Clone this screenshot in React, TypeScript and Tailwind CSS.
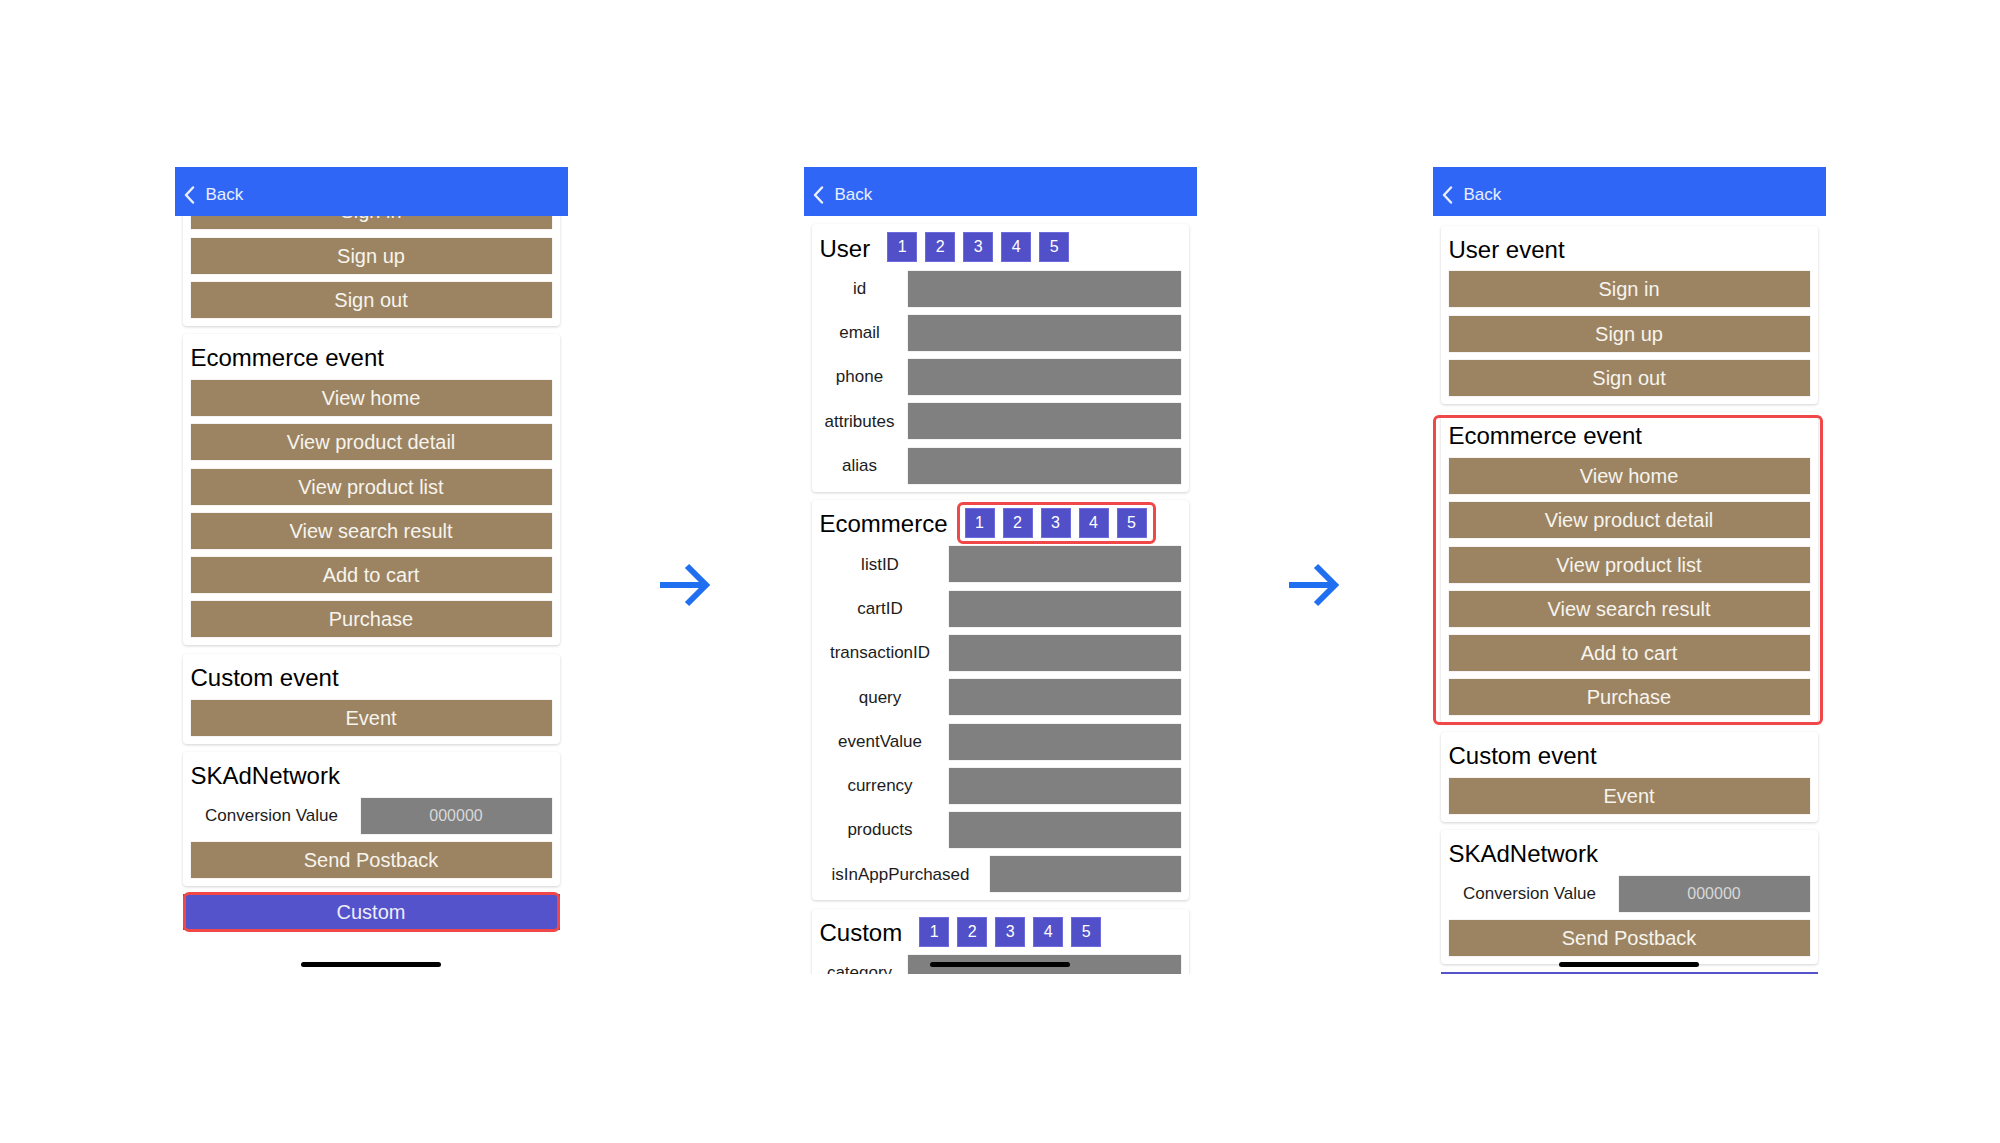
import type { ReactNode } from "react";

const userEvents = ["Sign in", "Sign up", "Sign out"];
const ecommerceEvents = [
  "View home",
  "View product detail",
  "View product list",
  "View search result",
  "Add to cart",
  "Purchase",
];
const userFields = ["id", "email", "phone", "attributes", "alias"];
const ecommerceFields = ["listID", "cartID", "transactionID", "query", "eventValue", "currency", "products"];

function Chevron() {
  return (
    <svg width="11" height="18" viewBox="0 0 11 18" fill="none" stroke="currentColor" strokeWidth="2.4" strokeLinecap="round" strokeLinejoin="round">
      <polyline points="9,1.5 2,9 9,16.5" />
    </svg>
  );
}

function NavBar() {
  return (
    <div className="relative z-10 flex h-[49px] shrink-0 items-center gap-[11px] bg-[#2f66f6] pl-[9px] pt-[6px] text-[17px] text-white/90">
      <Chevron />
      <span>Back</span>
    </div>
  );
}

function Phone({ children }: { children: ReactNode }) {
  return (
    <div className="relative flex h-[807px] w-[393px] shrink-0 flex-col overflow-hidden bg-white">
      <NavBar />
      <div className="relative flex-1 overflow-hidden">{children}</div>
      <div className="absolute bottom-[7px] left-1/2 h-[5px] w-[140px] -translate-x-1/2 rounded-full bg-black" />
    </div>
  );
}

// red annotation frame drawn over a highlighted element
function Mark({ className }: { className: string }) {
  return <div className={`pointer-events-none absolute rounded-[6px] border-[3px] border-[#f04848] ${className}`} />;
}

function Card({ head, children, mark }: { head: ReactNode; children: ReactNode; mark?: boolean }) {
  return (
    <div className="relative flex flex-col gap-[8.3px] rounded-[4px] bg-white p-2 shadow-[0_1px_3px_rgba(0,0,0,0.18)]">
      {head}
      {children}
      {mark && <Mark className="-bottom-[2px] -left-2 -right-[5px] top-[3px]" />}
    </div>
  );
}

function Title({ children }: { children: ReactNode }) {
  return <div className="h-[29.5px] text-[24px] leading-[31px] text-black">{children}</div>;
}

function EventButton({ label }: { label: string }) {
  return (
    <div className="flex h-9 items-center justify-center bg-[#9c8462] text-[20px] text-[#f7f4ee] shadow-[0_0_1px_rgba(0,0,0,0.25)]">
      {label}
    </div>
  );
}

function NumberBoxes({ mark }: { mark?: boolean }) {
  return (
    <div className="relative flex gap-2">
      {[1, 2, 3, 4, 5].map((n) => (
        <div
          key={n}
          className="flex h-[30px] w-[30px] items-center justify-center border border-[#6e6cdc] bg-[#5150c8] text-[16px] text-white"
        >
          {n}
        </div>
      ))}
      {mark && <Mark className="-bottom-[6px] -left-2 -right-[9px] -top-[6px]" />}
    </div>
  );
}

function TabHead({ title, mark }: { title: string; mark?: boolean }) {
  return (
    <div className="flex h-[30px] items-center gap-[17px]">
      <Title>{title}</Title>
      <NumberBoxes mark={mark} />
    </div>
  );
}

function FieldRow({ label, width, value }: { label: string; width: string; value?: string }) {
  return (
    <div className="flex h-9 items-center gap-2">
      <div className={`shrink-0 text-center text-[17px] text-[#1c1c1c] ${width}`}>{label}</div>
      <div className="flex h-9 flex-1 items-center justify-center bg-[#808080] text-[16px] text-[#d8d8d8] shadow-[0_0_1px_rgba(0,0,0,0.3)]">
        {value}
      </div>
    </div>
  );
}

function CustomButton({ mark }: { mark?: boolean }) {
  return (
    <div className="relative flex h-9 items-center justify-center bg-[#5553cc] text-[20px] text-[#eeeefa]">
      Custom
      {mark && <Mark className="-inset-y-[2px] inset-x-0 rounded-[5px]" />}
    </div>
  );
}

function EventScreen({ markEcommerce, markCustom }: { markEcommerce?: boolean; markCustom?: boolean }) {
  return (
    <div className="flex flex-col gap-[8.3px] px-2 pt-[9.5px]">
      <Card head={<Title>User event</Title>}>
        {userEvents.map((e) => (
          <EventButton key={e} label={e} />
        ))}
      </Card>
      <Card head={<Title>Ecommerce event</Title>} mark={markEcommerce}>
        {ecommerceEvents.map((e) => (
          <EventButton key={e} label={e} />
        ))}
      </Card>
      <Card head={<Title>Custom event</Title>}>
        <EventButton label="Event" />
      </Card>
      <Card head={<Title>SKAdNetwork</Title>}>
        <FieldRow label="Conversion Value" width="w-[162px]" value="000000" />
        <EventButton label="Send Postback" />
      </Card>
      <CustomButton mark={markCustom} />
    </div>
  );
}

function ParamScreen() {
  return (
    <div className="flex flex-col gap-[8.3px] px-2 pt-[8.3px]">
      <Card head={<TabHead title="User" />}>
        {userFields.map((f) => (
          <FieldRow key={f} label={f} width="w-[80px]" />
        ))}
      </Card>
      <Card head={<TabHead title="Ecommerce" mark />}>
        {ecommerceFields.map((f) => (
          <FieldRow key={f} label={f} width="w-[121px]" />
        ))}
        <FieldRow label="isInAppPurchased" width="w-[162px]" />
      </Card>
      <Card head={<TabHead title="Custom" />}>
        <FieldRow label="category" width="w-[80px]" />
        <FieldRow label="action" width="w-[80px]" />
      </Card>
    </div>
  );
}

function Arrow() {
  return (
    <div className="flex w-[236px] shrink-0 justify-center pt-[396px]">
      <svg width="52" height="44" viewBox="0 0 52 44" fill="none" stroke="#1f6ff0" strokeWidth="6">
        <path d="M0 22H46" />
        <path d="M27 3L46 22L27 41" />
      </svg>
    </div>
  );
}

export default function App() {
  return (
    <div className="flex h-[1143px] w-full justify-center bg-white pt-[167px] font-['Liberation_Sans',Arial,sans-serif]">
      <Phone>
        <div className="-mt-[78px]">
          <EventScreen markCustom />
        </div>
      </Phone>
      <Arrow />
      <Phone>
        <ParamScreen />
      </Phone>
      <Arrow />
      <Phone>
        <EventScreen markEcommerce />
      </Phone>
    </div>
  );
}
